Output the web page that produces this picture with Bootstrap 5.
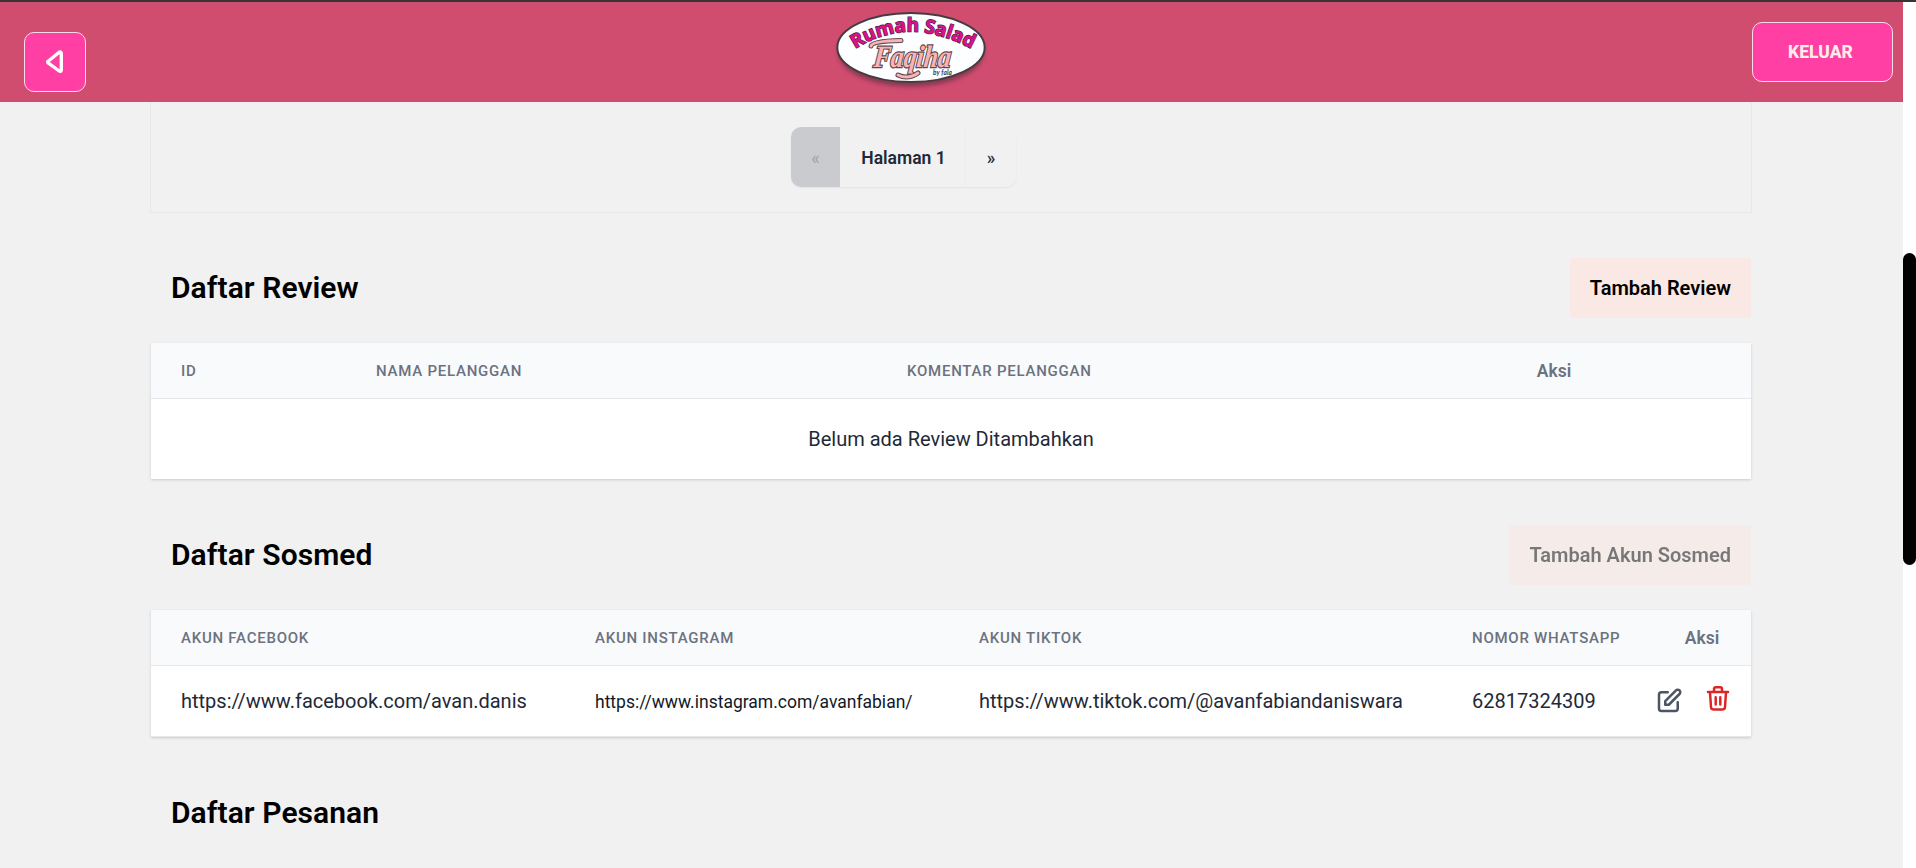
<!DOCTYPE html>
<html lang="id">
<head>
<meta charset="utf-8">
<meta name="viewport" content="width=device-width, initial-scale=1">
<title>Rumah Salad Faqiha - Admin</title>
<link href="https://cdn.jsdelivr.net/npm/bootstrap@5.3.0/dist/css/bootstrap.min.css" rel="stylesheet">
<script src="https://cdn.jsdelivr.net/npm/bootstrap@5.3.0/dist/js/bootstrap.bundle.min.js" defer></script>
<style>
  body { font-family: Roboto, "Liberation Sans", sans-serif; font-size: 20px; line-height: 30px; background: #f1f1f1; color: #1f2937; height: 868px; overflow: hidden; }
  .shell { height: 868px; border-top: 2px solid #383434; }
  .page-area { width: 1903px; }
  .scroll-track { width: 13px; background: #fff; padding-top: 251px; }
  .scroll-thumb { height: 312px; background: #000; border-radius: 8px; }
  .topbar { height: 100px; background: #d04d70; padding: 0 10px 0 24px; }
  .pink-btn { --bs-btn-bg: #ff3fa4; --bs-btn-color: #fbeee6; --bs-btn-border-color: #fbdcea; --bs-btn-border-radius: 10px; --bs-btn-hover-bg: #f02f95; --bs-btn-hover-color: #fff; height: 60px; padding: 0; }
  .back-btn { width: 62px; margin-top: 30px; }
  .exit-btn { width: 141px; margin-top: 20px; padding-right: 4px; font-size: 17.5px; font-weight: 800; letter-spacing: 0; }
  .brand-logo { margin-left: -17px; }
  .inner { width: 1602px; margin-left: 150px; }
  .pager-box { height: 111px; border: 1px solid #e5e7eb; border-top: 0; padding-top: 25px; padding-left: 640px; }
  .pager { height: 60px; width: 225px; border-radius: 10px; box-shadow: 0 1px 2px rgba(0,0,0,.06); font-size: 17.5px; font-weight: 600; }
  .pager span { padding-top: 1px; }
  .pager .prev { width: 49px; background: #cacbcf; color: #a4a6ab; border-radius: 10px 0 0 10px; font-weight: 500; }
  .pager .cur { width: 125px; padding-left: 2px; }
  .pager .next { width: 51px; border-left: 1px solid #ededee; font-weight: 500; }
  .section-head { height: 60px; margin: 0 1px 25px; padding-left: 20px; }
  .section-head h2 { font-size: 30px; font-weight: 600; color: #000; line-height: 40px; letter-spacing: .07px; }
  .add-btn { --bs-btn-bg: #fae8e4; --bs-btn-color: #000; --bs-btn-border-width: 0; --bs-btn-border-radius: 2px; --bs-btn-hover-bg: #f5dcd6; --bs-btn-disabled-bg: #fae8e4; --bs-btn-disabled-color: #000; --bs-btn-disabled-opacity: .5; height: 60px; padding: 0 20px; font-size: 20px; font-weight: 600; }
  .data-box { margin: 0 1px; box-shadow: 0 1px 3px rgba(0,0,0,.1), 0 1px 2px rgba(0,0,0,.06); background: #fff; }
  .data-box .table { --bs-table-bg: #fff; --bs-table-color: #1f2937; table-layout: fixed; border-collapse: separate; border-spacing: 0; color: #1f2937; }
  .data-box th { height: 56px; padding: 0 30px; background: #f9fafc; color: #6b7280; font-size: 15px; font-weight: 500; letter-spacing: .75px; text-transform: uppercase; border-bottom: 1px solid #e5e7eb; vertical-align: middle; white-space: nowrap; }
  .data-box th.act { text-transform: none; letter-spacing: 0; font-size: 17.5px; font-weight: 600; padding: 0; text-align: center; }
  .data-box td { padding: 0 30px; border: 0; vertical-align: middle; white-space: nowrap; }
  .review-box td { height: 80px; }
  .sosmed-box td { height: 70px; }
  .sosmed-box { border-bottom: 1px solid #e5e7eb; }
  .data-box .small-link { font-size: 17.5px; color: #111827; padding-top: 1px; }
  .review-sec { margin-top: 45px; }
  .sosmed-sec { margin-top: 46px; }
  .order-sec { margin-top: 46px; }
  .actions { padding-left: 1px; gap: 22px; }
  .trash-ic { margin-top: -2px; }
</style>
</head>
<body>
<div class="shell d-flex">
  <div class="page-area overflow-hidden">
    <header class="topbar d-flex justify-content-between align-items-start">
      <button class="btn pink-btn back-btn d-flex align-items-center justify-content-center" aria-label="Kembali">
        <svg width="18" height="24" viewBox="0 0 18 24" fill="none" stroke="#fff" stroke-width="3.4" stroke-linejoin="round"><path d="M2.1 11.2 13.2 2.2Q15.3 1.4 15.3 3.6V19.8Q15.3 22 13.2 21L2.1 12.9Q1.4 12 2.1 11.2Z"/></svg>
      </button>
      <svg class="brand-logo" width="160" height="96" viewBox="0 0 160 96">
        <defs><filter id="soft" x="-10%" y="-20%" width="120%" height="150%"><feGaussianBlur stdDeviation="2.2"/></filter></defs>
        <ellipse cx="80" cy="50" rx="73" ry="35" fill="#5b2c3c" opacity=".6" filter="url(#soft)"/>
        <ellipse cx="80" cy="45.5" rx="73.7" ry="34.5" fill="#fcfeff" stroke="#443c40" stroke-width="2"/>
        <path id="arc" d="M24 47Q80 11 146 50" fill="none"/>
        <text font-family="Open Sans, sans-serif" font-weight="700" font-size="19" fill="#d9128a" stroke="#5a1747" stroke-width="1.4" paint-order="stroke" textLength="123"><textPath href="#arc">Rumah Salad</textPath></text>
        <path d="M40 44Q41 39 70 38.5M67 73Q77 78 87 71" stroke="#5c474d" stroke-width="5" fill="none" stroke-linecap="round"/>
        <text transform="translate(42 65) skewX(-6)" font-family="Liberation Serif, serif" font-style="italic" font-weight="700" font-size="31" fill="#f7b3b5" stroke="#5c474d" stroke-width="2.4" paint-order="stroke" textLength="77" lengthAdjust="spacingAndGlyphs">Faqiha</text>
        <path d="M40 44Q41 39 70 38.5M67 73Q77 78 87 71" fill="none" stroke="#f7b3b5" stroke-width="3" stroke-linecap="round"/>
        <text x="102" y="73" font-family="Lato, sans-serif" font-style="italic" font-weight="700" font-size="6.5" fill="#3f393c" textLength="19">by fala</text>
      </svg>
      <button class="btn pink-btn exit-btn">KELUAR</button>
    </header>

    <main class="inner">
      <div class="pager-box">
        <div class="pager d-flex">
          <span class="prev d-flex align-items-center justify-content-center">«</span>
          <span class="cur d-flex align-items-center justify-content-center">Halaman 1</span>
          <span class="next d-flex align-items-center justify-content-center">»</span>
        </div>
      </div>

      <section class="review-sec">
        <div class="section-head d-flex justify-content-between align-items-center">
          <h2 class="mb-0">Daftar Review</h2>
          <button class="btn add-btn">Tambah Review</button>
        </div>
        <div class="data-box review-box">
          <table class="table mb-0">
            <colgroup><col width="195"><col width="531"><col width="480"><col width="394"></colgroup>
            <thead><tr><th>ID</th><th>Nama Pelanggan</th><th>Komentar Pelanggan</th><th class="act">Aksi</th></tr></thead>
            <tbody><tr><td colspan="4" class="text-center">Belum ada Review Ditambahkan</td></tr></tbody>
          </table>
        </div>
      </section>

      <section class="sosmed-sec">
        <div class="section-head d-flex justify-content-between align-items-center">
          <h2 class="mb-0">Daftar Sosmed</h2>
          <button class="btn add-btn" disabled>Tambah Akun Sosmed</button>
        </div>
        <div class="data-box sosmed-box">
          <table class="table mb-0">
            <colgroup><col width="414"><col width="384"><col width="493"><col width="211"><col width="98"></colgroup>
            <thead><tr><th>Akun Facebook</th><th>Akun Instagram</th><th>Akun Tiktok</th><th>Nomor WhatsApp</th><th class="act">Aksi</th></tr></thead>
            <tbody><tr>
              <td>https://www.facebook.com/avan.danis</td>
              <td class="small-link">https://www.instagram.com/avanfabian/</td>
              <td>https://www.tiktok.com/@avanfabiandaniswara</td>
              <td>62817324309</td>
              <td class="p-0"><div class="actions d-flex">
                <svg class="edit-ic" width="30" height="30" viewBox="0 0 24 24" fill="none" stroke="#4b5563" stroke-width="2" stroke-linecap="round" stroke-linejoin="round"><path d="M11 5H6a2 2 0 00-2 2v11a2 2 0 002 2h11a2 2 0 002-2v-5m-1.414-9.414a2 2 0 112.828 2.828L11.828 15H9v-2.828l8.586-8.586z"/></svg>
                <svg class="trash-ic" width="24" height="28" viewBox="0 0 24 28" fill="none" stroke="#dc2626" stroke-width="2.5" stroke-linecap="round" stroke-linejoin="round"><path d="M2 8H22M4 8.5 5 23Q5.1 25.4 7.4 25.4H16.6Q18.9 25.4 19 23L20 8.5M8 8V5Q8 3.2 9.8 3.2H14.2Q16 3.2 16 5V8M9.7 13.2V20.4M14.3 13.2V20.4"/></svg>
              </div></td>
            </tr></tbody>
          </table>
        </div>
      </section>

      <section class="order-sec">
        <div class="section-head d-flex align-items-center"><h2 class="mb-0">Daftar Pesanan</h2></div>
      </section>
    </main>
  </div>
  <div class="scroll-track"><div class="scroll-thumb"></div></div>
</div>
</body>
</html>
